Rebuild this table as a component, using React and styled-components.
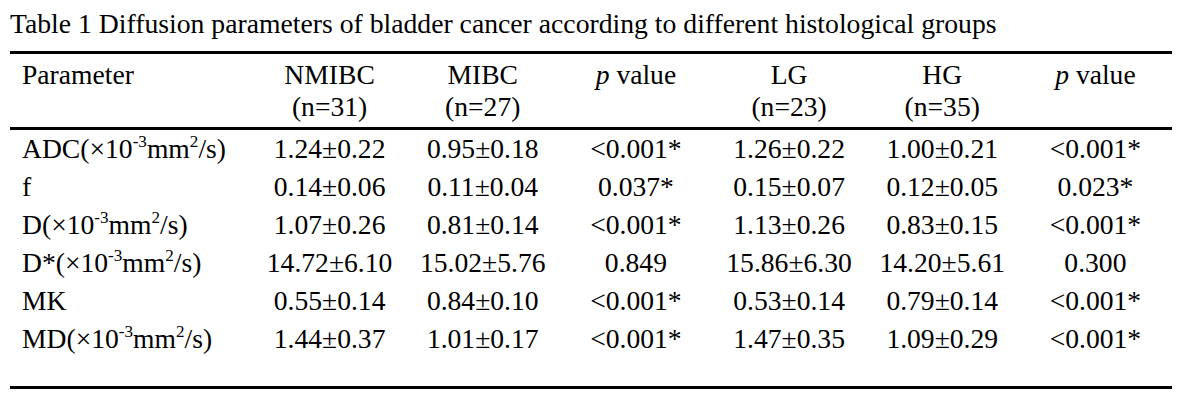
import React from 'react';
import styled, { createGlobalStyle } from 'styled-components';

const GlobalStyle = createGlobalStyle`
  * { box-sizing: border-box; }
  body {
    margin: 0;
    background: #fff;
  }
`;

const Page = styled.div`
  width: 1178px;
  padding: 9px 6px 0 10px;
  font-family: "Liberation Serif", "Times New Roman", serif;
  color: #000;
`;

const Caption = styled.div`
  font-size: 27.7px;
  line-height: 30px;
  margin-bottom: 12px;
  white-space: nowrap;
`;

const Table = styled.div`
  border-top: 3px solid #000;
  border-bottom: 3px solid #000;
`;

const Row = styled.div`
  display: grid;
  grid-template-columns: 243px repeat(6, 1fr);
  font-size: 27.6px;
  line-height: ${(p) => (p.head ? '32px' : '38px')};
`;

const HeadRow = styled(Row)`
  border-bottom: 3px solid #000;
  padding: 5px 0 4px;
`;

const Body = styled.div`
  padding-bottom: 28px;
`;

const Cell = styled.div`
  text-align: center;
  white-space: nowrap;
`;

const Label = styled(Cell)`
  text-align: left;
  padding-left: 12px;
`;

const Sup = styled.sup`
  font-size: 0.62em;
  line-height: 0;
  vertical-align: 0;
  position: relative;
  top: -0.62em;
`;

const Italic = styled.i`
  font-style: italic;
`;

const unit = (
  <>
    (×10<Sup>-3</Sup>mm<Sup>2</Sup>/s)
  </>
);

const rows = [
  ['ADC', true, '1.24±0.22', '0.95±0.18', '<0.001*', '1.26±0.22', '1.00±0.21', '<0.001*'],
  ['f', false, '0.14±0.06', '0.11±0.04', '0.037*', '0.15±0.07', '0.12±0.05', '0.023*'],
  ['D', true, '1.07±0.26', '0.81±0.14', '<0.001*', '1.13±0.26', '0.83±0.15', '<0.001*'],
  ['D*', true, '14.72±6.10', '15.02±5.76', '0.849', '15.86±6.30', '14.20±5.61', '0.300'],
  ['MK', false, '0.55±0.14', '0.84±0.10', '<0.001*', '0.53±0.14', '0.79±0.14', '<0.001*'],
  ['MD', true, '1.44±0.37', '1.01±0.17', '<0.001*', '1.47±0.35', '1.09±0.29', '<0.001*'],
];

const PValue = () => (
  <>
    <Italic>p</Italic> value
  </>
);

const App = () => (
  <Page>
    <GlobalStyle />
    <Caption>Table 1 Diffusion parameters of bladder cancer according to different histological groups</Caption>
    <Table>
      <HeadRow head>
        <Label>Parameter</Label>
        <Cell>NMIBC<br />(n=31)</Cell>
        <Cell>MIBC<br />(n=27)</Cell>
        <Cell><PValue /></Cell>
        <Cell>LG<br />(n=23)</Cell>
        <Cell>HG<br />(n=35)</Cell>
        <Cell><PValue /></Cell>
      </HeadRow>
      <Body>
        {rows.map(([name, hasUnit, ...vals]) => (
          <Row key={name}>
            <Label>
              {name}
              {hasUnit && unit}
            </Label>
            {vals.map((v, i) => (
              <Cell key={i}>{v}</Cell>
            ))}
          </Row>
        ))}
      </Body>
    </Table>
  </Page>
);

export default App;
